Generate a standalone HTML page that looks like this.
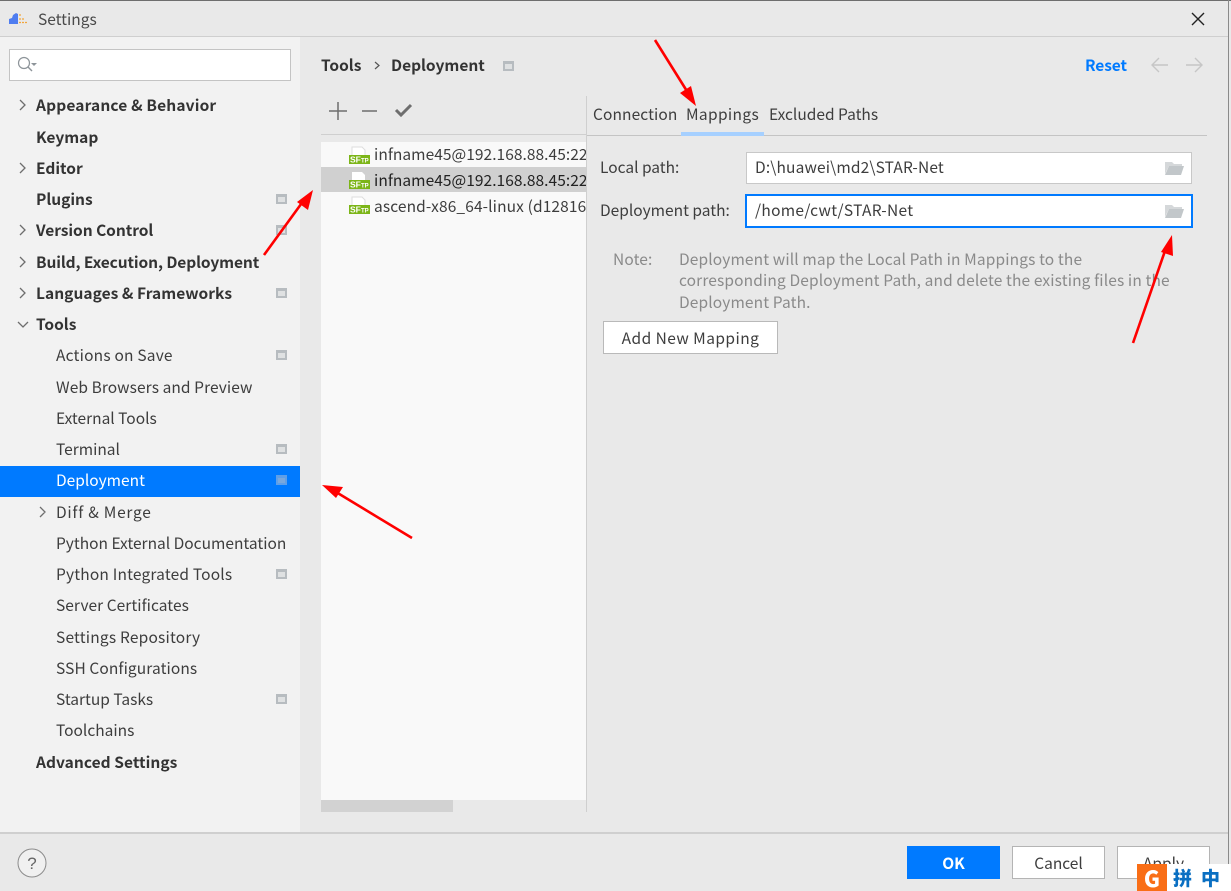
<!DOCTYPE html>
<html><head><meta charset="utf-8">
<style>
html,body{margin:0;padding:0;width:1231px;height:891px;overflow:hidden;background:#e9e9e9}
body{position:relative;font-family:"Noto Sans CJK SC","Liberation Sans",sans-serif;font-size:15.5px;color:#3d3d3d}
.a{position:absolute}
.t{position:absolute;white-space:nowrap;line-height:20px;height:20px;transform:translateY(-10px)}
.b{font-weight:700;color:#333}
.g{position:absolute;left:276px;width:11px;height:10px;background:#b7bcc0;transform:translateY(-5px)}
.g:after{content:"";position:absolute;left:2px;top:3px;width:7px;height:5px;background:#dfe1e2}
.n{color:#8a8a8a;letter-spacing:.13px}
.s{font:700 8.500px "Liberation Sans",sans-serif;fill:#fff}
.s2{font:700 6px "Liberation Sans",sans-serif;fill:#fff}
</style></head><body>
<div class="a" style="left:0;top:0;width:1231px;height:1px;background:#6e6e6e"></div>
<div class="a" style="left:0;top:36px;width:1228px;height:1px;background:#cfcfcf"></div>
<div class="a" style="left:1228px;top:0;width:1px;height:891px;background:#8a8a8a"></div>
<svg class="a" style="left:8px;top:12px" width="22" height="14"><path d="M1 12V7l3-1 1-3 3-2 2 1v10z" fill="#4f7df0"/><path d="M11 3h3M11 7h5M11 10.500h8" stroke="#f2a63c" stroke-width="1.3" stroke-dasharray="2 1" fill="none"/></svg>
<div class="t" style="left:38px;top:19px;color:#4a4a4a">Settings</div>
<svg class="a" style="left:1191px;top:12px" width="14" height="14"><path d="M1 1l12 12M13 1L1 13" stroke="#222" stroke-width="1.4" fill="none"/></svg>

<div class="a" style="left:0;top:37px;width:300px;height:796px;background:#f2f2f2"></div>
<div class="a" style="left:9px;top:49px;width:280px;height:30px;background:#fff;border:1px solid #c4c4c4"></div>
<svg class="a" style="left:16px;top:56px" width="24" height="18"><circle cx="8" cy="7" r="5.500" fill="none" stroke="#8d9499" stroke-width="1.2"/><path d="M12 11l4 4" stroke="#8d9499" stroke-width="1.4"/><path d="M15 7h6l-3 3z" fill="#8d9499"/></svg>

<div class="a" style="left:0;top:466px;width:300px;height:31px;background:#007aff"></div>

<svg class="a" style="left:0;top:0" width="60" height="530" fill="none" stroke="#6e6e6e" stroke-width="1.3"><path d="M20 100l5 5-5 5M20 163l5 5-5 5M20 225l5 5-5 5M20 257l5 5-5 5M20 288l5 5-5 5M18 322l5 5 5-5M40 507l5 5-5 5"/></svg>

<div class="t b" style="left:36px;top:105px;letter-spacing:.15px">Appearance &amp; Behavior</div>
<div class="t b" style="left:36px;top:137px">Keymap</div>
<div class="t b" style="left:36px;top:168px">Editor</div>
<div class="t b" style="left:36px;top:199px">Plugins</div>
<div class="t b" style="left:36px;top:230px;letter-spacing:-.05px">Version Control</div>
<div class="t b" style="left:36px;top:262px;letter-spacing:-.1px">Build, Execution, Deployment</div>
<div class="t b" style="left:36px;top:293px;letter-spacing:.04px">Languages &amp; Frameworks</div>
<div class="t b" style="left:36px;top:324px">Tools</div>
<div class="t" style="left:56px;top:355px;letter-spacing:.2px">Actions on Save</div>
<div class="t" style="left:56px;top:387px;letter-spacing:.08px">Web Browsers and Preview</div>
<div class="t" style="left:56px;top:418px">External Tools</div>
<div class="t" style="left:56px;top:449px">Terminal</div>
<div class="t" style="left:56px;top:480px;color:#fff">Deployment</div>
<div class="t" style="left:56px;top:512px;letter-spacing:.75px">Diff &amp; Merge</div>
<div class="t" style="left:56px;top:543px">Python External Documentation</div>
<div class="t" style="left:56px;top:574px;letter-spacing:.18px">Python Integrated Tools</div>
<div class="t" style="left:56px;top:605px;letter-spacing:.05px">Server Certificates</div>
<div class="t" style="left:56px;top:637px;letter-spacing:.2px">Settings Repository</div>
<div class="t" style="left:56px;top:668px;letter-spacing:.1px">SSH Configurations</div>
<div class="t" style="left:56px;top:699px">Startup Tasks</div>
<div class="t" style="left:56px;top:730px">Toolchains</div>
<div class="t b" style="left:36px;top:762px;letter-spacing:.05px">Advanced Settings</div>

<div class="g" style="top:199px"></div>
<div class="g" style="top:230px"></div>
<div class="g" style="top:293px"></div>
<div class="g" style="top:355px"></div>
<div class="g" style="top:449px"></div>
<div class="a" style="left:276px;top:475px;width:11px;height:10px;background:#5f9fe8"></div>
<div class="a" style="left:278px;top:478px;width:7px;height:5px;background:#7aa8dc"></div>
<div class="g" style="top:574px"></div>
<div class="g" style="top:699px"></div>

<div class="t b" style="left:321px;top:65px">Tools</div>
<svg class="a" style="left:373px;top:60px" width="8" height="11"><path d="M2 2l4 3.500L2 9" fill="none" stroke="#555" stroke-width="1.2"/></svg>
<div class="t b" style="left:391px;top:65px">Deployment</div>
<div class="g" style="left:503px;top:66px"></div>
<div class="t" style="left:1085px;top:65px;color:#007aff;font-weight:700;letter-spacing:-.1px">Reset</div>
<svg class="a" style="left:1150px;top:56px" width="54" height="18" fill="none" stroke="#c6c6c6" stroke-width="1.4"><path d="M2 9h16M9 2L2 9l7 7M36 9h16M45 2l7 7-7 7"/></svg>

<svg class="a" style="left:325px;top:100px" width="95" height="22" fill="none" stroke="#6e6e6e"><path d="M13 2v18M4 11h18M37 11h15" stroke-width="1.5"/><path d="M71 10l5 5 10-10" stroke-width="3"/></svg>
<div class="a" style="left:321px;top:134px;width:265px;height:1px;background:#cfcfcf"></div>
<div class="a" style="left:586px;top:96px;width:1px;height:716px;background:#cfcfcf"></div>
<div class="a" style="left:321px;top:142px;width:265px;height:658px;background:#f9f9f9"></div>
<div class="a" style="left:321px;top:167px;width:265px;height:25px;background:#d0d0d0"></div>
<div class="a" style="left:321px;top:800px;width:132px;height:12px;background:#d2d2d2"></div>

<svg class="a" style="left:349px;top:146px" width="21" height="19"><path d="M3 1h10l3 3v6H3z" fill="#fff" stroke="#ddd"/><rect x="0" y="9" width="21" height="9" fill="#7cb518"/><text class="s" x="1" y="16.500">SF</text><text class="s2" x="12" y="16.500">TP</text></svg>
<svg class="a" style="left:349px;top:171px" width="21" height="19"><path d="M3 1h10l3 3v6H3z" fill="#fff"/><rect x="0" y="9" width="21" height="9" fill="#7cb518"/><text class="s" x="1" y="16.500">SF</text><text class="s2" x="12" y="16.500">TP</text></svg>
<svg class="a" style="left:349px;top:196px" width="21" height="19"><path d="M3 1h10l3 3v6H3z" fill="#fff" stroke="#ddd"/><rect x="0" y="9" width="21" height="9" fill="#7cb518"/><text class="s" x="1" y="16.500">SF</text><text class="s2" x="12" y="16.500">TP</text></svg>
<div class="a" style="left:321px;top:142px;width:265px;height:76px;overflow:hidden">
<div class="t" style="left:53px;top:12px;letter-spacing:.05px">infname45@192.168.88.45:22</div>
<div class="t" style="left:53px;top:38px;color:#222;letter-spacing:.05px">infname45@192.168.88.45:22</div>
<div class="t" style="left:53px;top:64px;letter-spacing:.12px">ascend-x86_64-linux (d12816</div>
</div>

<div class="t" style="left:593px;top:114px;letter-spacing:.1px">Connection</div>
<div class="t" style="left:686px;top:114px;letter-spacing:.35px">Mappings</div>
<div class="t" style="left:769px;top:114px">Excluded Paths</div>
<div class="a" style="left:587px;top:135px;width:620px;height:1px;background:#c4c4c4"></div>
<div class="a" style="left:681px;top:132px;width:83px;height:4px;background:#a6d0ff"></div>

<div class="t" style="left:600px;top:167px">Local path:</div>
<div class="t" style="left:600px;top:210px">Deployment path:</div>
<div class="a" style="left:746px;top:152px;width:444px;height:30px;background:#fff;border:1px solid #c8c8c8"></div>
<div class="a" style="left:745px;top:194px;width:444px;height:30px;background:#fff;border:2px solid #007aff"></div>
<div class="t" style="left:755px;top:167px;letter-spacing:.15px">D:\huawei\md2\STAR-Net</div>
<div class="t" style="left:755px;top:210px;letter-spacing:.3px">/home/cwt/STAR-Net</div>
<svg class="a" style="left:1164px;top:160px" width="21" height="16"><path d="M1 2h7l2 2h8v2H5L1 14z" fill="#d5d8da"/><path d="M5 6h15l-3 9H1z" fill="#c2c7ca"/></svg>
<svg class="a" style="left:1164px;top:203px" width="21" height="16"><path d="M1 2h7l2 2h8v2H5L1 14z" fill="#d5d8da"/><path d="M5 6h15l-3 9H1z" fill="#c2c7ca"/></svg>

<div class="t n" style="left:613px;top:259px">Note:</div>
<div class="t n" style="left:679px;top:259px">Deployment will map the Local Path in Mappings to the</div>
<div class="t n" style="left:679px;top:280px">corresponding Deployment Path, and delete the existing files in the</div>
<div class="t n" style="left:679px;top:302px">Deployment Path.</div>
<div class="a" style="left:603px;top:321px;width:173px;height:31px;background:#fff;border:1px solid #b9b9b9;text-align:center;line-height:33px;letter-spacing:.45px">Add New Mapping</div>

<div class="a" style="left:0;top:832px;width:1228px;height:2px;background:#cfcfcf"></div>
<svg class="a" style="left:17px;top:848px" width="30" height="30"><circle cx="15" cy="15" r="14" fill="#f0f0f0" stroke="#8c8c8c"/><text x="15" y="21" font-size="17" text-anchor="middle" fill="#666" font-family="Liberation Sans,sans-serif">?</text></svg>
<div class="a" style="left:907px;top:846px;width:93px;height:33px;background:#007aff;color:#fff;font-weight:700;text-align:center;line-height:34px">OK</div>
<div class="a" style="left:1012px;top:846px;width:91px;height:31px;background:#fff;border:1px solid #b4b4b4;text-align:center;line-height:33px">Cancel</div>
<div class="a" style="left:1117px;top:846px;width:91px;height:31px;background:#fff;border:1px solid #b4b4b4;text-align:center;line-height:33px">Apply</div>

<div class="a" style="left:1137px;top:864px;width:94px;height:27px;background:#fff"></div>
<div class="a" style="left:1137px;top:864px;width:30px;height:27px;background:#f96e16"></div>
<div class="t" style="left:1137px;top:878px;width:30px;text-align:center;color:#fff;font-weight:900;font-size:22px">G</div>
<div class="t" style="left:1173px;top:878px;color:#0a6fc2;font-weight:900;font-size:19px;letter-spacing:9px">拼中</div>

<svg class="a" style="left:0;top:0" width="1231" height="891" fill="#f00" stroke="none">
<path d="M264 255L304 200" stroke="#f00" stroke-width="2.600"/><path d="M313 190l-5 20-11-8z"/>
<path d="M655 40L690 96" stroke="#f00" stroke-width="2.600"/><path d="M696 106l-16-13 11-7z"/>
<path d="M412 538L336 492" stroke="#f00" stroke-width="2.600"/><path d="M322 485l21 2-7 11z"/>
<path d="M1133 343L1166 248" stroke="#f00" stroke-width="2.600"/><path d="M1172 235l1 21-12-4z"/>
</svg>
</body></html>
